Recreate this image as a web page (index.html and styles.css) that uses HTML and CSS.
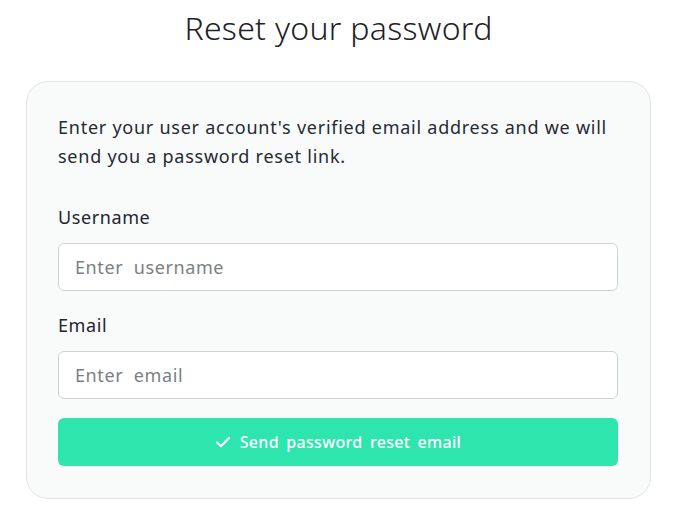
FILE: index.html
```html
<!DOCTYPE html>
<html>
<head>
<meta charset="utf-8">
<link rel="stylesheet" href="styles.css">
</head>
<body>
<main class="page">
  <h1 class="title">Reset your password</h1>
  <section class="card">
    <p class="intro">Enter your user account's verified email address and we will send you a password reset link.</p>
    <div class="field">
      <label class="label" for="u">Username</label>
      <input class="input" id="u" type="text" placeholder="Enter  username">
    </div>
    <div class="field last">
      <label class="label" for="e">Email</label>
      <input class="input" id="e" type="text" placeholder="Enter  email">
    </div>
    <button class="btn" type="button">
      <svg class="check" viewBox="0 0 16 16" width="16" height="16"><path d="M2 8.5l4 3.8 8-8.3" fill="none" stroke="#fff" stroke-width="2.2" stroke-linecap="round" stroke-linejoin="round"/></svg>
      <span>Send password reset email</span>
    </button>
  </section>
</main>
</body>
</html>
```

FILE: styles.css
```css
* { box-sizing: border-box; }
body {
  margin: 0;
  background: #fff;
  font-family: "Noto Sans", sans-serif;
  color: #222631;
}
.page {
  display: flex;
  flex-direction: column;
  align-items: center;
  padding: 6px 26px 0;
}
.title {
  margin: 0;
  font-size: 32px;
  font-weight: 300;
  line-height: 44px;
  letter-spacing: 0.3px;
  color: #1e2128;
}
.card {
  margin-top: 31px;
  width: 625px;
  background: #f9fafa;
  border: 1px solid #e3e4e6;
  border-radius: 22px;
  padding: 31px 32px 32px 31px;
}
.intro {
  margin: 0 0 33px;
  font-size: 18px;
  line-height: 29px;
  letter-spacing: 0.75px;
  color: #252a33;
}
.field { margin-bottom: 21px; }
.field.last { margin-bottom: 19px; }
.label {
  display: block;
  font-size: 18px;
  line-height: 26px;
  letter-spacing: 0.6px;
  margin-bottom: 13px;
  color: #1f2430;
}
.input {
  display: block;
  width: 100%;
  height: 48px;
  border: 1px solid #ced2d8;
  border-radius: 6px;
  background: #fff;
  padding: 0 16px;
  font-family: inherit;
  font-size: 18px;
  letter-spacing: 0.6px;
  color: #222;
}
.input::placeholder { color: #7a7f86; }
.btn {
  width: 100%;
  height: 48px;
  border: none;
  border-radius: 6px;
  background: #2ee5ad;
  color: #fff;
  font-family: inherit;
  font-size: 16px;
  font-weight: 500;
  letter-spacing: 0.3px;
  display: flex;
  align-items: center;
  justify-content: center;
  gap: 9px;
  word-spacing: 3px;
}
```
